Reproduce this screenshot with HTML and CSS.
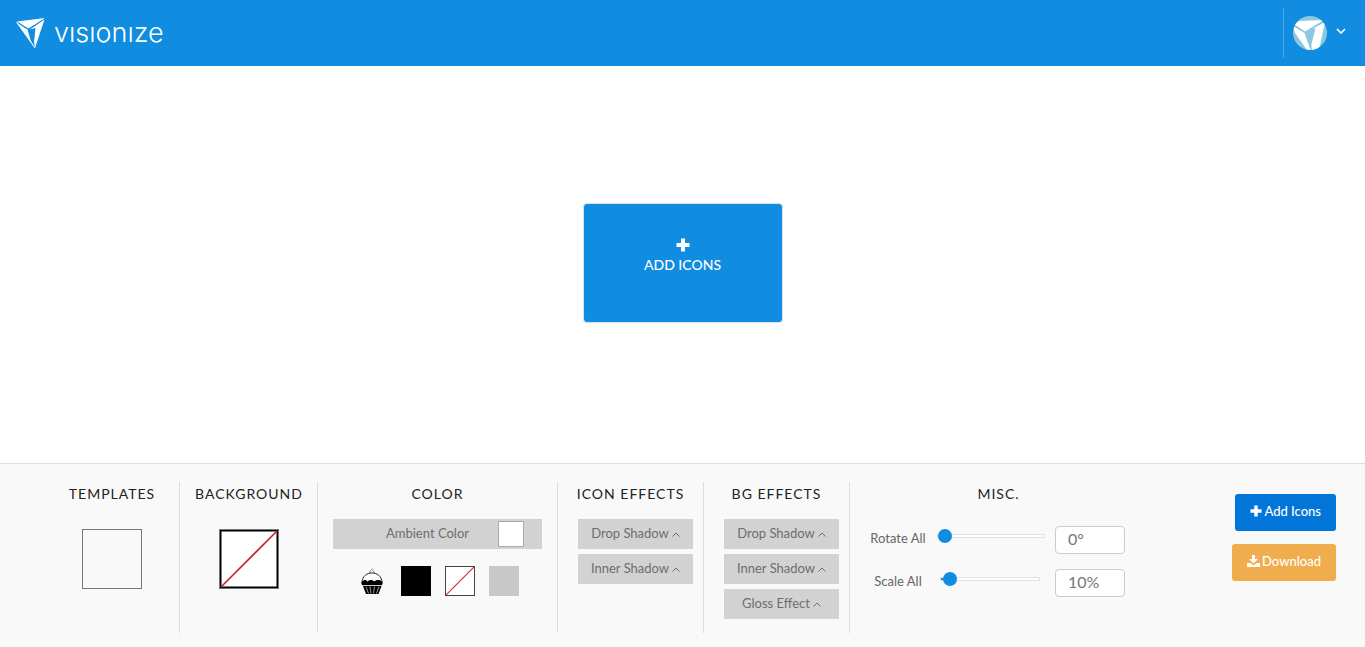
FILE: index.html
```html
<!DOCTYPE html>
<html lang="en">
<head>
<meta charset="utf-8">
<meta name="viewport" content="width=device-width, initial-scale=1">
<title>Visionize</title>
<link rel="stylesheet" href="styles.css">
</head>
<body>
<header class="topbar">
  <a class="brand" href="#" aria-label="Visionize home">
    <svg class="brand-mark" width="30" height="32" viewBox="0 0 30 32" aria-hidden="true">
      <path fill="#fff" d="M1 4.500L29 1 12.500 11.500zM.5 5.500L11.500 12.500 14.500 23 18 29zM28.500 2.500L19 31 18 25 19.500 11 14 12.500z"/>
      <path fill="none" stroke="#fff" d="M.5 5L19 31"/>
      <path fill="#108ce0" d="M13.500 13.500L19 12 17 24z"/>
    </svg>
    <span class="brand-name">vısıonıze</span>
  </a>
  <button class="account" type="button" aria-label="Account menu">
    <svg width="34" height="34" viewBox="0 0 34 34" aria-hidden="true">
      <clipPath id="disc"><circle cx="17" cy="17" r="17"/></clipPath>
      <g clip-path="url(#disc)">
        <path fill="#8cc7e0" d="M0 0h34v34H0z"/>
        <path fill="#fff" d="M1 8L6 5 31 4 12 15.500zM0 10L11.500 17 17.500 34H14L2 17zM32 6L26 34H18.500V28L22.500 12.500 20 12.500z"/>
      </g>
    </svg>
    <svg width="10" height="6" viewBox="0 0 10 6" aria-hidden="true"><path fill="none" stroke="#fff" stroke-width="1.600" d="M1 1l4 4 4-4"/></svg>
  </button>
</header>

<main class="workspace">
  <button class="add-tile" type="button">
    <svg width="14" height="14" viewBox="0 0 14 14" aria-hidden="true"><path fill="currentColor" d="M5 0.500h4V5h4.500v4H9v4.500H5V9H.5V5H5z"/></svg>
    <span>ADD ICONS</span>
  </button>
</main>

<footer class="panel">
  <div class="tools">
    <section class="tool tool-templates">
      <h2>TEMPLATES</h2>
      <button class="preview" type="button" aria-label="Choose template"></button>
    </section>
    <section class="tool tool-background">
      <h2>BACKGROUND</h2>
      <button class="preview preview-none" type="button" aria-label="No background">
        <svg width="58" height="58" viewBox="0 0 58 58" aria-hidden="true"><path fill="#fff" stroke="#000" stroke-width="1.500" d="M.75.75h56.500v56.500H.75z"/><path stroke="#c8202f" stroke-width="1.600" d="M1 57L57 1"/></svg>
      </button>
    </section>
    <section class="tool tool-color">
      <h2>COLOR</h2>
      <button class="ambient" type="button"><span></span><span class="ambient-label">Ambient Color</span><span class="ambient-chip"></span></button>
      <div class="swatches">
        <button class="swatch" type="button" aria-label="Original icon">
          <svg width="30" height="30" viewBox="0 0 30 30" aria-hidden="true">
            <path fill="#fff" stroke="#222" d="M5 17C5 10 10 7 15 7s10 3 10 10"/>
            <path fill="none" stroke="#555" stroke-width=".8" d="M12.500 7.500c0-3 1.500-3 3-5M17.500 7.500c0-2-1-2.500-2-3"/>
            <path d="M4.500 16c3-3 5-2 6-.5 2-2 5-2 7 0 2-2 6-2 8 .5.500 2-.5 3.500-2 3.500h-17c-1.500 0-2.500-1.500-2-3.500zM6 20h18.500l-3 8H9z"/>
            <path fill="none" stroke="#fff" stroke-width=".6" d="M6 19.500h18M9 20.500l2.500 7M13 20.500l1 7M17.500 20.500l-1 7M22 20.500l-2.500 7"/>
          </svg>
        </button>
        <button class="swatch swatch-black" type="button" aria-label="Black"></button>
        <button class="swatch swatch-none" type="button" aria-label="No color">
          <svg width="28" height="28" viewBox="0 0 28 28" aria-hidden="true"><path stroke="#d5303d" stroke-width="1.200" d="M0 28L28 0"/></svg>
        </button>
        <button class="swatch swatch-gray" type="button" aria-label="Gray"></button>
      </div>
    </section>
    <section class="tool tool-effects">
      <h2>ICON EFFECTS</h2>
      <button class="effect" type="button">Drop Shadow <svg class="caret" viewBox="0 0 8 5" aria-hidden="true"><path d="M.5 4.500L4 1l3.500 3.500"/></svg></button>
      <button class="effect" type="button">Inner Shadow <svg class="caret" viewBox="0 0 8 5" aria-hidden="true"><path d="M.5 4.500L4 1l3.500 3.500"/></svg></button>
    </section>
    <section class="tool tool-effects">
      <h2>BG EFFECTS</h2>
      <button class="effect" type="button">Drop Shadow <svg class="caret" viewBox="0 0 8 5" aria-hidden="true"><path d="M.5 4.500L4 1l3.500 3.500"/></svg></button>
      <button class="effect" type="button">Inner Shadow <svg class="caret" viewBox="0 0 8 5" aria-hidden="true"><path d="M.5 4.500L4 1l3.500 3.500"/></svg></button>
      <button class="effect" type="button">Gloss Effect <svg class="caret" viewBox="0 0 8 5" aria-hidden="true"><path d="M.5 4.500L4 1l3.500 3.500"/></svg></button>
    </section>
    <section class="tool tool-misc">
      <h2>MISC.</h2>
      <div class="adjust">
        <label for="rotate">Rotate All</label>
        <input class="slider" id="rotate" type="range" min="0" max="360" value="0">
        <input class="amount" type="text" value="0°" aria-label="Rotation">
      </div>
      <div class="adjust">
        <label for="scale">Scale All</label>
        <input class="slider slider-scale" id="scale" type="range" min="8" max="100" value="10">
        <input class="amount" type="text" value="10%" aria-label="Scale">
      </div>
    </section>
  </div>
  <div class="actions">
    <button class="action action-add" type="button"><svg width="12" height="12" viewBox="0 0 14 14" aria-hidden="true"><path fill="currentColor" d="M5 0.500h4V5h4.500v4H9v4.500H5V9H.5V5H5z"/></svg>Add Icons</button>
    <button class="action action-download" type="button"><svg width="13" height="12" viewBox="0 0 13 12" aria-hidden="true"><path fill="currentColor" d="M5 0h3v4h3L6.500 8.500 2 4h3zM0 8h3.500l3 2.500 3-2.500H13v4H0z"/></svg>Download</button>
  </div>
</footer>
</body>
</html>
```
FILE: styles.css
```css
* {
  box-sizing: border-box;
}

body {
  margin: 0;
  min-height: 100vh;
  display: flex;
  flex-direction: column;
  background: #fff;
  color: #222;
  font-family: Lato, "Open Sans", sans-serif;
  font-size: 13px;
}

button,
input {
  font: inherit;
  margin: 0;
}

button {
  padding: 0;
  border: 0;
  background: none;
  cursor: pointer;
}

svg {
  display: block;
}

.topbar {
  display: flex;
  justify-content: space-between;
  align-items: center;
  padding: 8px 19px 8px 16px;
  background: #108ce0;
}

.brand {
  display: flex;
  align-items: center;
  gap: 8px;
  color: #fff;
  text-decoration: none;
}

.brand-name {
  font-family: Inter, Lato, sans-serif;
  font-size: 27px;
  font-weight: 300;
  line-height: 28px;
}

.account {
  display: flex;
  align-items: center;
  gap: 9px;
  height: 50px;
  padding-left: 9px;
  border-left: 1px solid #4aa8e8;
}

.account svg:last-child {
  margin-bottom: 4px;
}

.workspace {
  flex: 1;
  display: flex;
  align-items: center;
  justify-content: center;
  padding: 24px 24px 27px;
}

.add-tile {
  display: flex;
  flex-direction: column;
  align-items: center;
  justify-content: center;
  gap: 3px;
  width: 200px;
  height: 120px;
  padding-bottom: 13px;
  border: 1px solid #d5e3ee;
  border-radius: 4px;
  background: #108ce0;
  color: #fff;
  font-size: 14px;
  font-weight: 500;
  line-height: 20px;
}

.panel {
  display: flex;
  justify-content: space-between;
  padding: 18px 29px 14px 45px;
  border-top: 1px solid #ddd;
  background: #f9f9f9;
}

.tools {
  display: flex;
  min-height: 151px;
}

.tool {
  display: flex;
  flex-direction: column;
  padding: 2px 15px 0;
  border-right: 1px solid #ddd;
}

.tool h2 {
  margin: 0 0 15px;
  font-size: 14px;
  font-weight: 400;
  line-height: 20px;
  letter-spacing: 1px;
  text-align: center;
  white-space: nowrap;
}

.tool-templates {
  width: 135px;
}

.tool-background {
  width: 138px;
}

.tool-color {
  width: 240px;
}

.tool-effects {
  width: 146px;
  padding-right: 10px;
  padding-left: 20px;
}

.tool-effects h2 {
  margin-right: -5px;
  margin-left: -15px;
}

.tool-misc {
  width: 298px;
  border-right: 0;
  padding-left: 19px;
  padding-right: 20px;
}

.preview {
  width: 60px;
  height: 60px;
  margin-top: 10px;
  align-self: center;
  border: 1px solid #777;
}

.ambient {
  display: grid;
  grid-template-columns: 1fr auto 1fr;
  align-items: center;
  height: 30px;
  padding: 0 18px 0 0;
  background: #d2d2d2;
  color: #6e6e6e;
}

.ambient-label {
  padding: 0 2px 2px 0;
}

.ambient-chip {
  width: 26px;
  height: 26px;
  justify-self: end;
  border: 1px solid #aaa;
  background: #fff;
}

.swatches {
  display: flex;
  justify-content: center;
  gap: 14px;
  margin-top: 17px;
}

.swatch {
  width: 30px;
  height: 30px;
}

.swatch-black {
  background: #000;
}

.swatch-none {
  border: 1px solid #444;
  background: #fff;
}

.swatch-gray {
  background: #c8c8c8;
}

.effect {
  display: flex;
  align-items: center;
  justify-content: center;
  gap: 3px;
  height: 30px;
  margin-bottom: 5px;
  padding-bottom: 2px;
  background: #d2d2d2;
  color: #6e6e6e;
  white-space: nowrap;
}

.caret {
  width: 8px;
  height: 5px;
  margin-top: 2px;
  fill: none;
  stroke: currentColor;
}

.adjust {
  display: grid;
  grid-template-columns: 58px 128px 70px;
  align-items: center;
  height: 28px;
  margin: 7px 0 8px;
  color: #666;
}

.adjust label {
  padding-bottom: 4px;
  text-align: center;
  white-space: nowrap;
}

.slider {
  appearance: none;
  width: 107px;
  height: 14px;
  margin: 0 0 8px 10px;
  background: none;
}

.slider-scale {
  width: 100px;
  margin-left: 13px;
}

.slider::-webkit-slider-runnable-track {
  height: 4px;
  border: 1px solid #e2e2e2;
  background: #fff;
}

.slider-scale::-webkit-slider-runnable-track {
  background: linear-gradient(to right, #108ce0 9px, #fff 9px);
}

.slider::-webkit-slider-thumb {
  appearance: none;
  width: 14px;
  height: 14px;
  margin-top: -6px;
  border-radius: 50%;
  background: #108ce0;
}

.amount {
  width: 70px;
  height: 28px;
  padding: 0 12px 3px;
  border: 1px solid #ccc;
  border-radius: 4px;
  background: #fff;
  color: #777;
  font-size: 16px;
}

.actions {
  display: flex;
  flex-direction: column;
  align-items: flex-end;
  gap: 13px;
  padding-top: 12px;
}

.action {
  display: flex;
  align-items: center;
  justify-content: center;
  gap: 2px;
  height: 37px;
  padding: 0 15px 3px;
  border-radius: 3px;
  color: #fff;
  font-weight: 500;
}

.action-add {
  background: #0275d8;
}

.action-download {
  background: #f0ad4e;
}
```
